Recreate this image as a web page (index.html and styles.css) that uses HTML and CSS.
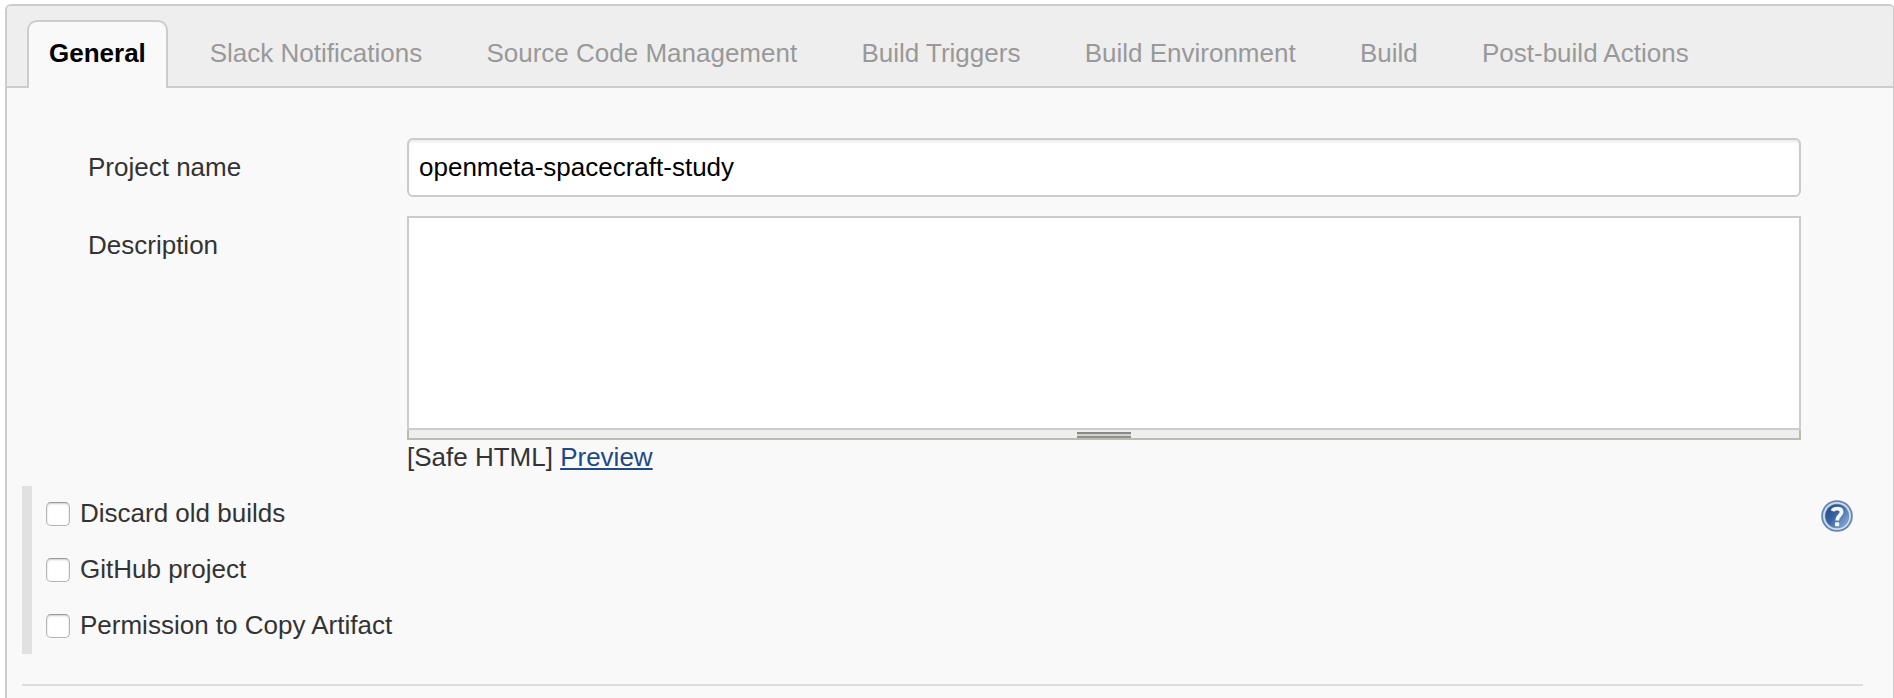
FILE: index.html
```html
<!DOCTYPE html>
<html lang="en">
<head>
<meta charset="utf-8">
<title>Project configuration</title>
<link rel="stylesheet" href="styles.css">
</head>
<body>
<form class="panel">
  <nav class="tabs">
    <a class="tab tab-active">General</a>
    <a class="tab">Slack Notifications</a>
    <a class="tab">Source Code Management</a>
    <a class="tab">Build Triggers</a>
    <a class="tab">Build Environment</a>
    <a class="tab">Build</a>
    <a class="tab">Post-build Actions</a>
  </nav>
  <div class="fields">
    <label class="label-name" for="name">Project name</label>
    <input class="text-input" id="name" type="text" value="openmeta-spacecraft-study">
    <label class="label-description" for="description">Description</label>
    <div class="editor">
      <textarea class="textarea" id="description"></textarea>
      <div class="handle"><span class="grip"></span></div>
      <div class="hint">[Safe HTML] <a class="preview">Preview</a></div>
    </div>
  </div>
  <div class="options">
    <div class="option">
      <input class="checkbox" type="checkbox" id="discard"><label class="option-label" for="discard">Discard old builds</label>
      <svg class="help" viewBox="0 0 32 32" role="img" aria-label="Help">
        <defs>
          <linearGradient id="disc" x1="0" y1="0.1" x2="1" y2="0.9">
            <stop offset="0" stop-color="#204a87"/>
            <stop offset="0.4" stop-color="#3660a0"/>
            <stop offset="1" stop-color="#8fb0d8"/>
          </linearGradient>
        </defs>
        <circle cx="16" cy="16" r="15.8" fill="#6685b3"/>
        <circle cx="16" cy="16" r="13.1" fill="#6f8fbc" stroke="#cfdbeb" stroke-width="1.8"/>
        <circle cx="16" cy="16" r="11.5" fill="url(#disc)"/>
        <path d="M11.4 11C12.2 9.2 14 8.6 16.4 8.6C19.2 8.6 20.6 10 20.6 12C20.6 15.4 16.2 15.4 16.2 20.4" fill="none" stroke="#f4f7fb" stroke-width="3.8"/>
        <rect x="14" y="22.2" width="4.2" height="4" rx="0.8" fill="#f4f7fb"/>
      </svg>
    </div>
    <div class="option"><input class="checkbox" type="checkbox" id="github"><label class="option-label" for="github">GitHub project</label></div>
    <div class="option"><input class="checkbox" type="checkbox" id="copy"><label class="option-label" for="copy">Permission to Copy Artifact</label></div>
  </div>
  <hr class="rule">
</form>
</body>
</html>
```
FILE: styles.css
```css
* { box-sizing: border-box; }
html { overflow: hidden; background: #fff; }
body {
  margin: 0;
  padding: 4px 0 0 5px;
  height: 698px;
  overflow: hidden;
  font: 26px/30px "Liberation Sans", Arial, sans-serif;
  color: #333;
}
.panel {
  width: 1890px;
  height: 720px;
  border: 2px solid #ccc;
  border-radius: 6px;
  background: #f9f9f9;
  overflow: hidden;
}
.tabs {
  display: flex;
  height: 82px;
  padding: 14px 0 0 20px;
  background: #eee;
  box-shadow: inset 0 -2px #ccc;
}
.tab {
  height: 68px;
  padding: 16px 20px 0;
  border: 2px solid transparent;
  border-bottom: 0;
  margin-right: 20.25px;
  color: #999;
  white-space: nowrap;
}
.tab-active {
  width: 141px;
  padding-right: 0;
  margin-right: 19.75px;
  border-color: #ccc;
  border-radius: 10px 10px 0 0;
  background: #f9f9f9;
  color: #000;
  font-weight: bold;
}
.fields {
  display: grid;
  grid-template-columns: 319px 1394px;
  row-gap: 19px;
  padding: 50px 0 0 81px;
}
.label-name { padding-top: 14px; }
.label-description { padding-top: 14px; }
.text-input {
  height: 59px;
  padding: 0 10px;
  border: 2px solid #ccc;
  border-radius: 6px;
  background: #fff;
  box-shadow: inset 0 2px 3px rgba(0, 0, 0, .08);
  color: #000;
  font: inherit;
}
.editor { height: 270px; }
.textarea {
  display: block;
  width: 100%;
  height: 214px;
  border: 2px solid #ccc;
  border-radius: 0;
  background: #fff;
  resize: none;
}
.handle {
  display: flex;
  justify-content: center;
  height: 10px;
  padding-top: 2px;
  border: 2px solid #bbbbb0;
  border-top: 0;
  background: #eee;
}
.grip {
  width: 54px;
  height: 6px;
  background: linear-gradient(#888 0 2px, #d0d2cc 2px 4px, #8f8f8f 4px 6px);
}
.hint { padding-top: 2px; }
.preview {
  color: #204a87;
  text-decoration: underline;
  text-decoration-thickness: 2px;
  text-underline-offset: 2px;
}
.options {
  width: 1841px;
  margin-left: 15px;
  border-left: 10px solid #e1e1e1;
}
.option {
  display: flex;
  align-items: center;
  height: 56px;
  padding-left: 14px;
}
.option-label { padding-bottom: 2px; }
.checkbox {
  appearance: none;
  width: 24px;
  height: 24px;
  margin: 0 10px 0 0;
  border: 1px solid #b4b4b4;
  border-top-color: #999;
  border-radius: 5px;
  background: #fff;
  box-shadow: inset 0 1px 2px rgba(0, 0, 0, .2);
}
.help {
  width: 32px;
  height: 32px;
  margin: 4px 10px 0 auto;
}
.rule {
  width: 1841px;
  height: 2px;
  margin: 30px 0 0 15px;
  border: 0;
  background: #ddd;
}
```
